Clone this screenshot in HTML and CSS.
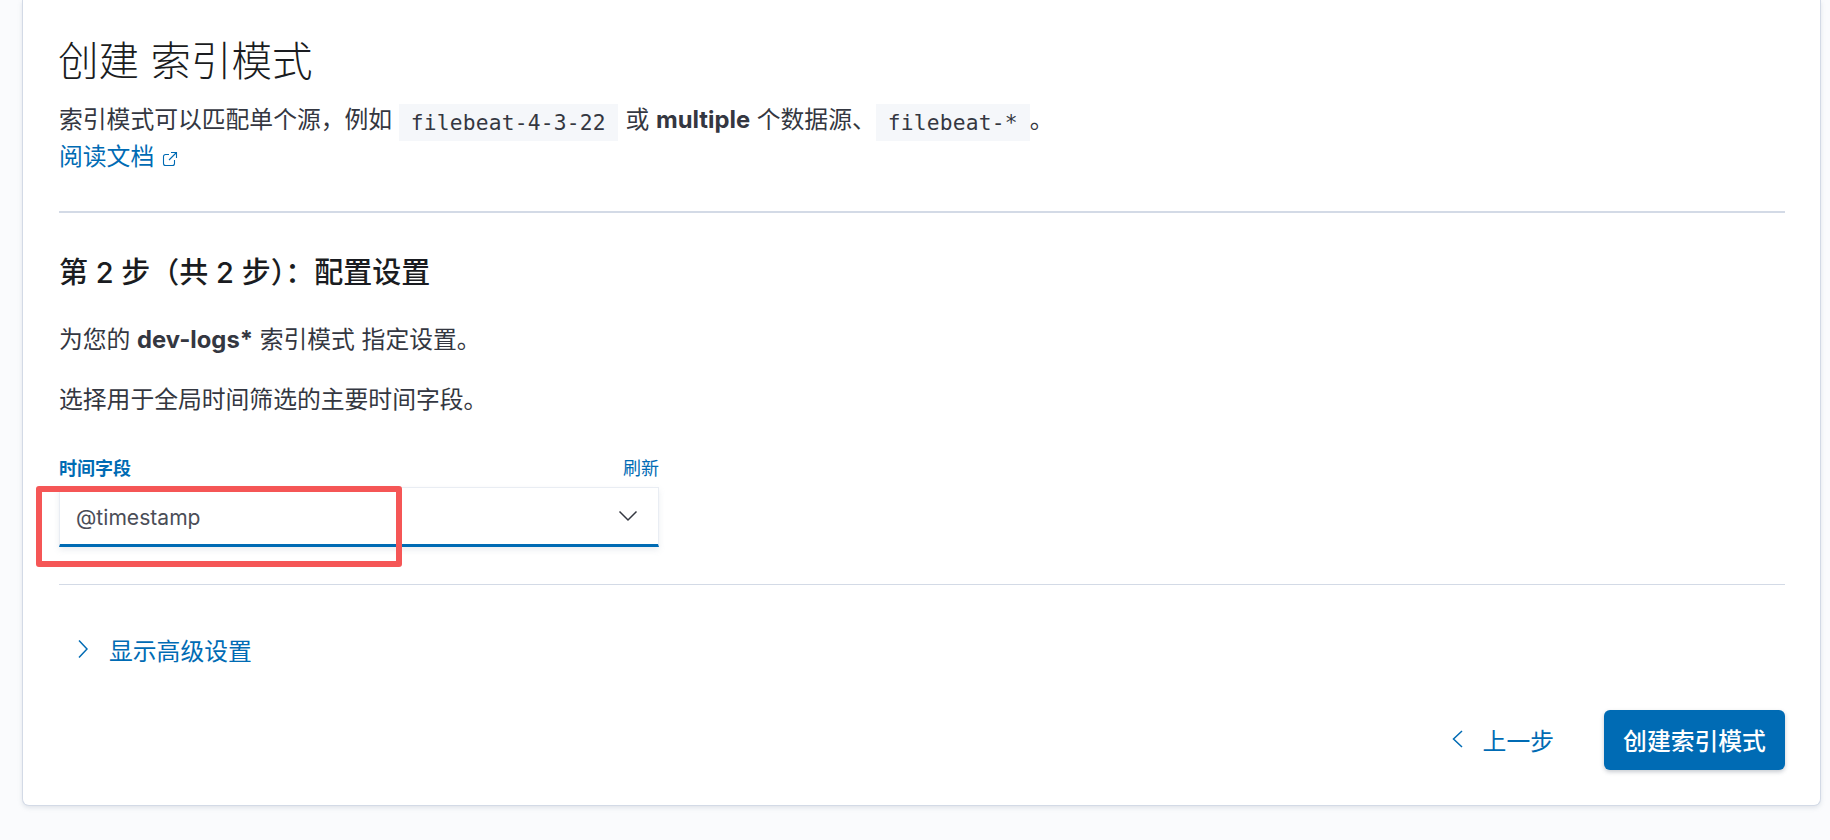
FILE: index.html
```html
<!DOCTYPE html>
<html lang="zh">
<head>
<meta charset="utf-8">
<title>创建索引模式</title>
<link rel="stylesheet" href="styles.css">
</head>
<body>
<main class="panel">
  <h1 class="title">创建 索引模式</h1>
  <p class="intro">索引模式可以匹配单个源，例如 <code class="code">filebeat-4-3-22</code> 或 <strong>multiple</strong> 个数据源、<code class="code">filebeat-*</code>。<br>
  <a class="link" href="#">阅读文档<svg class="popout" viewBox="0 0 16 16" width="16" height="16"><path d="M12.5 9v3.5a2 2 0 0 1-2 2h-7a2 2 0 0 1-2-2v-7a2 2 0 0 1 2-2H7M9 1.5h5.5V7M14.5 1.5 7 9" fill="none" stroke="currentColor" stroke-width="1.1"/></svg></a></p>
  <hr class="rule rule-thick">
  <h2 class="step">第 2 步（共 2 步）：配置设置</h2>
  <p class="para first">为您的 <strong>dev-logs*</strong> 索引模式 指定设置。</p>
  <p class="para second">选择用于全局时间筛选的主要时间字段。</p>
  <div class="field">
    <div class="field-head"><label class="label">时间字段</label><a class="refresh" href="#">刷新</a></div>
    <div class="select-wrap">
      <div class="select"><span>@timestamp</span>
        <svg class="chev-down" viewBox="0 0 20 12" width="20" height="12"><path d="M1.5 1.5 10 10l8.5-8.5" fill="none" stroke="#343741" stroke-width="1.5"/></svg>
      </div>
      <div class="highlight"></div>
    </div>
  </div>
  <hr class="rule rule-thin">
  <a class="advanced" href="#"><svg viewBox="0 0 10 20" width="10" height="20"><path d="M1 1.5 9 10l-8 8.5" fill="none" stroke="currentColor" stroke-width="1.5"/></svg><span>显示高级设置</span></a>
  <div class="actions">
    <a class="back" href="#"><svg viewBox="0 0 11 18" width="11" height="18"><path d="M10 1 1.5 9l8.500 8" fill="none" stroke="currentColor" stroke-width="1.5"/></svg><span>上一步</span></a>
    <button class="primary" type="button">创建索引模式</button>
  </div>
</main>
</body>
</html>
```

FILE: styles.css
```css
* { box-sizing: border-box; }
html, body { margin: 0; height: 840px; overflow: hidden; }
body {
  background: #fafbfd;
  padding: 0 9px 0 22px;
  font-family: Inter, "Noto Sans CJK SC", sans-serif;
  font-size: 23.8px;
  color: #343741;
}
.panel {
  height: 806px;
  padding: 0 35px 0 36px;
  background: #fff;
  border: 1px solid #d3dae6;
  border-top: 0;
  border-radius: 0 0 7px 7px;
  box-shadow: 0 2px 4px rgba(152, 162, 179, .25);
}
.title {
  margin: 0 0 0 -1px;
  padding-top: 35px;
  font-size: 40.5px;
  line-height: 54px;
  font-weight: 300;
  color: #1a1c21;
}
.intro {
  margin: 15px 0 0;
  line-height: 31px;
}
strong { font-weight: 700; }
.code {
  display: inline-block;
  padding: 0 12px;
  margin: 0 1px 0 0;
  height: 37px;
  line-height: 37px;
  font-family: "DejaVu Sans Mono", monospace;
  font-size: 21.25px;
  letter-spacing: .2px;
  background: #f5f7fa;
  vertical-align: -2px;
}
.code:last-of-type { margin-right: 0; }
.link, .refresh, .advanced, .back { color: #006bb4; text-decoration: none; }
.popout { margin-left: 8px; vertical-align: -2px; }
.rule { border: 0; margin: 0; background: #d3dae6; }
.rule-thick { height: 2px; margin-top: 39px; }
.rule-thin { height: 1px; margin-top: 37px; }
.step {
  margin: 42px 0 0;
  font-size: 29px;
  line-height: 36px;
  font-weight: 500;
  color: #1a1c21;
}
.para { margin: 0; line-height: 36px; }
.para.first { margin-top: 31px; }
.para.second { margin-top: 24px; }
.field { width: 600px; margin-top: 39px; }
.field-head {
  display: flex;
  justify-content: space-between;
  align-items: center;
  height: 24px;
  font-size: 18px;
  line-height: 24px;
}
.label { font-weight: 700; color: #006bb4; }
.select-wrap { position: relative; margin-top: 6px; }
.select {
  display: flex;
  justify-content: space-between;
  align-items: center;
  height: 60px;
  padding: 3px 20px 0 16px;
  border: 1px solid #e9edf3;
  border-bottom: 3px solid #006bb4;
  font-size: 21.1px;
  color: #4a4d57;
  box-shadow: 0 3px 6px rgba(152, 162, 179, .18);
}
.chev-down { margin-bottom: 4px; }
.highlight {
  position: absolute;
  left: -23px;
  top: -1px;
  width: 366px;
  height: 81px;
  border: 6px solid #f55656;
  border-radius: 3px;
}
.advanced {
  display: flex;
  align-items: center;
  gap: 21px;
  margin: 48px 0 0 19px;
  height: 32px;
}
.actions {
  display: flex;
  justify-content: flex-end;
  align-items: center;
  margin-top: 45px;
}
.back {
  display: flex;
  align-items: center;
  gap: 20px;
  margin: 0 50px 2px 0;
  font-size: 23.8px;
}
.primary {
  width: 181px;
  height: 60px;
  padding: 0 0 2px;
  border: 0;
  border-radius: 6px;
  background: #006bb4;
  color: #fff;
  font: 500 23.8px Inter, "Noto Sans CJK SC", sans-serif;
  box-shadow: 0 2px 4px rgba(65, 78, 101, .3);
}
```
